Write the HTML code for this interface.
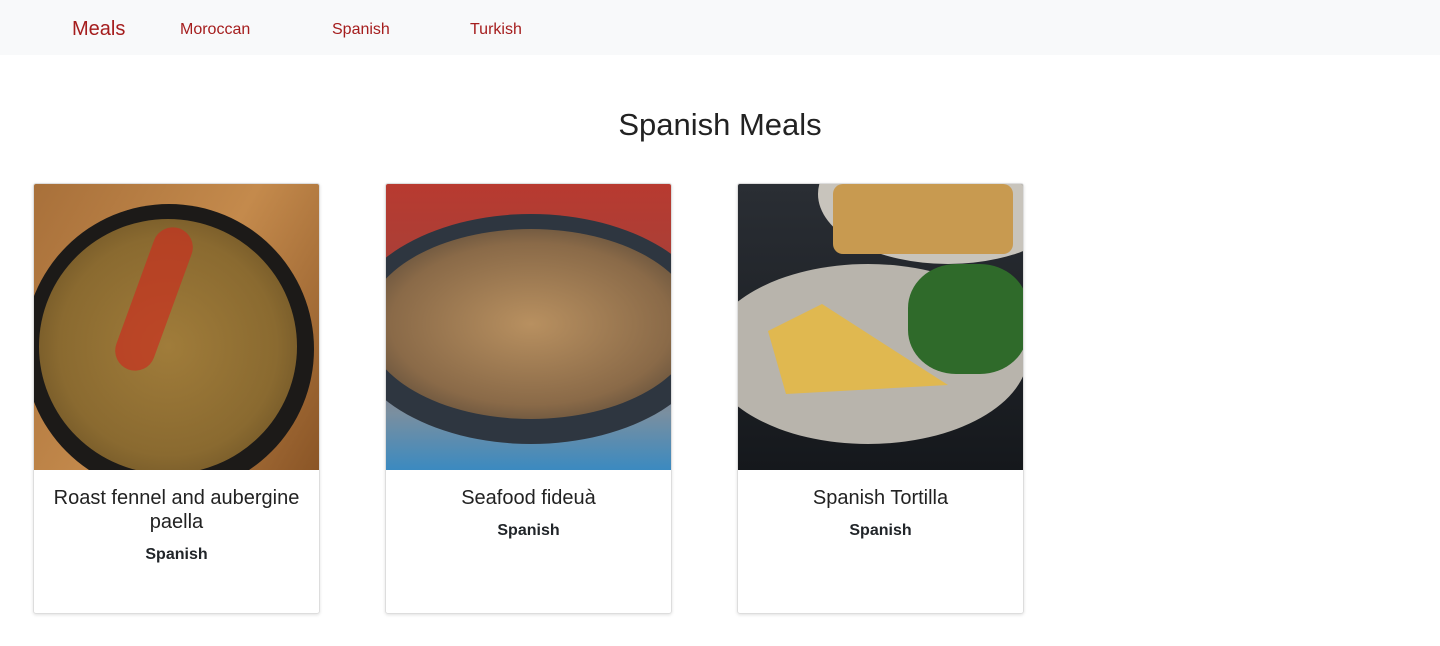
<!DOCTYPE html>
<html><head><meta charset="utf-8"><style>
*{box-sizing:border-box;margin:0;padding:0}
body{width:1440px;height:646px;background:#fff;font-family:"Liberation Sans",sans-serif;color:#212529;position:relative;overflow:hidden}
.nav{position:absolute;left:0;top:0;width:1440px;height:55px;background:#f8f9fa}
.nav span{position:absolute;color:#a51d1d}
.brand{left:72px;top:18px;font-size:20px}
.l{top:21px;font-size:16px}
h1{position:absolute;top:107px;width:1440px;text-align:center;font-size:31px;font-weight:400;color:#222}
.card{position:absolute;top:183px;width:287px;height:431px;border:1px solid #ddd;border-radius:3px;box-shadow:0 1px 3px rgba(0,0,0,.12);overflow:hidden;text-align:center}
.img{width:286px;height:286px;position:relative;overflow:hidden}
.t{font-size:20px;line-height:24px;margin-top:16px;padding:0 14px;color:#222}
.s{font-size:16px;font-weight:bold;margin-top:12px}
</style></head><body>
<div class="nav"><span class="brand">Meals</span><span class="l" style="left:180px">Moroccan</span><span class="l" style="left:332px">Spanish</span><span class="l" style="left:470px">Turkish</span></div>
<h1>Spanish Meals</h1>
<div class="card" style="left:33px"><div class="img" style="background:linear-gradient(120deg,#a8703a,#c48a4c 50%,#8a5526)">
<div style="position:absolute;left:-10px;top:20px;width:290px;height:290px;border-radius:50%;background:#1c1a18"></div>
<div style="position:absolute;left:5px;top:35px;width:258px;height:255px;border-radius:50%;background:radial-gradient(circle,#a07c3a,#8a6a30 60%,#5a4420)"></div>
<div style="position:absolute;left:100px;top:40px;width:40px;height:150px;background:#c83020;transform:rotate(20deg);border-radius:20px;opacity:.7"></div>
</div><div class="t">Roast fennel and aubergine paella</div><div class="s">Spanish</div></div>
<div class="card" style="left:385px"><div class="img" style="background:linear-gradient(180deg,#b83a30,#a84038 30%,#7a8fa0 80%,#3b8ac0)">
<div style="position:absolute;left:-40px;top:30px;width:370px;height:230px;border-radius:50%;background:#2e3640"></div>
<div style="position:absolute;left:-20px;top:45px;width:330px;height:190px;border-radius:50%;background:radial-gradient(ellipse,#b89060,#8a6a48 60%,#3a3530)"></div>
</div><div class="t">Seafood fideuà</div><div class="s">Spanish</div></div>
<div class="card" style="left:737px"><div class="img" style="background:linear-gradient(180deg,#2a2e34,#15181c)">
<div style="position:absolute;left:80px;top:-60px;width:260px;height:140px;border-radius:50%;background:#c8c4bc"></div>
<div style="position:absolute;left:95px;top:0px;width:180px;height:70px;background:#c89a50;border-radius:10px"></div>
<div style="position:absolute;left:-30px;top:80px;width:320px;height:180px;border-radius:50%;background:#b8b4ac"></div>
<div style="position:absolute;left:170px;top:80px;width:120px;height:110px;border-radius:40%;background:#2f6a2a"></div>
<div style="position:absolute;left:30px;top:120px;width:180px;height:90px;background:#e0b850;clip-path:polygon(0 30%,30% 0,100% 90%,10% 100%)"></div>
</div><div class="t">Spanish Tortilla</div><div class="s">Spanish</div></div>
</body></html>
